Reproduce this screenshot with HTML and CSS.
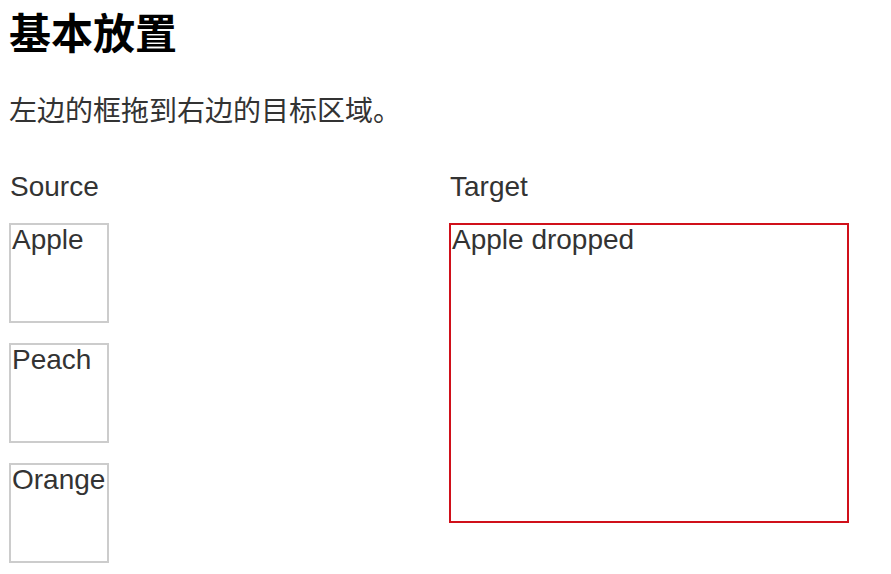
FILE: index.html
```html
<!DOCTYPE html>
<html lang="zh">
<head>
<meta charset="utf-8">
<title>基本放置</title>
<link rel="stylesheet" href="styles.css">
</head>
<body>
<h2 class="title">基本放置</h2>
<p class="intro">左边的框拖到右边的目标区域。</p>
<div class="columns">
  <div class="col">
    <div class="label">Source</div>
    <div class="items">
      <div class="item">Apple</div>
      <div class="item">Peach</div>
      <div class="item">Orange</div>
    </div>
  </div>
  <div class="col">
    <div class="label">Target</div>
    <div class="target">Apple dropped</div>
  </div>
</div>
</body>
</html>
```
FILE: styles.css
```css
html, body {
  margin: 0;
  background: #fff;
}
body {
  padding: 0 9px;
  font-family: "Liberation Sans", Arial, "Noto Sans CJK SC", sans-serif;
  font-size: 28px;
  color: #333;
}
.title {
  margin: 9px 0 0;
  font-family: "Liberation Sans", "Noto Sans CJK SC", sans-serif;
  font-size: 42px;
  font-weight: 700;
  line-height: 52px;
  color: #000;
}
.intro {
  margin: 28px 0 0;
  font-family: "Noto Sans CJK SC", sans-serif;
  font-size: 28px;
  line-height: 40px;
  color: #333;
}
.columns {
  display: flex;
  margin-top: 42px;
}
.col {
  flex: 0 0 440px;
  display: flex;
  flex-direction: column;
  gap: 20px;
}
.label {
  line-height: 32px;
  padding-left: 1px;
}
.items {
  display: flex;
  flex-direction: column;
  gap: 20px;
}
.item {
  box-sizing: border-box;
  width: 100px;
  height: 100px;
  border: 2px solid #ccc;
  padding: 0 1px;
  line-height: 30px;
}
.target {
  box-sizing: border-box;
  width: 400px;
  height: 300px;
  border: 2px solid #d0101a;
  padding: 0 1px;
  line-height: 30px;
}
```
